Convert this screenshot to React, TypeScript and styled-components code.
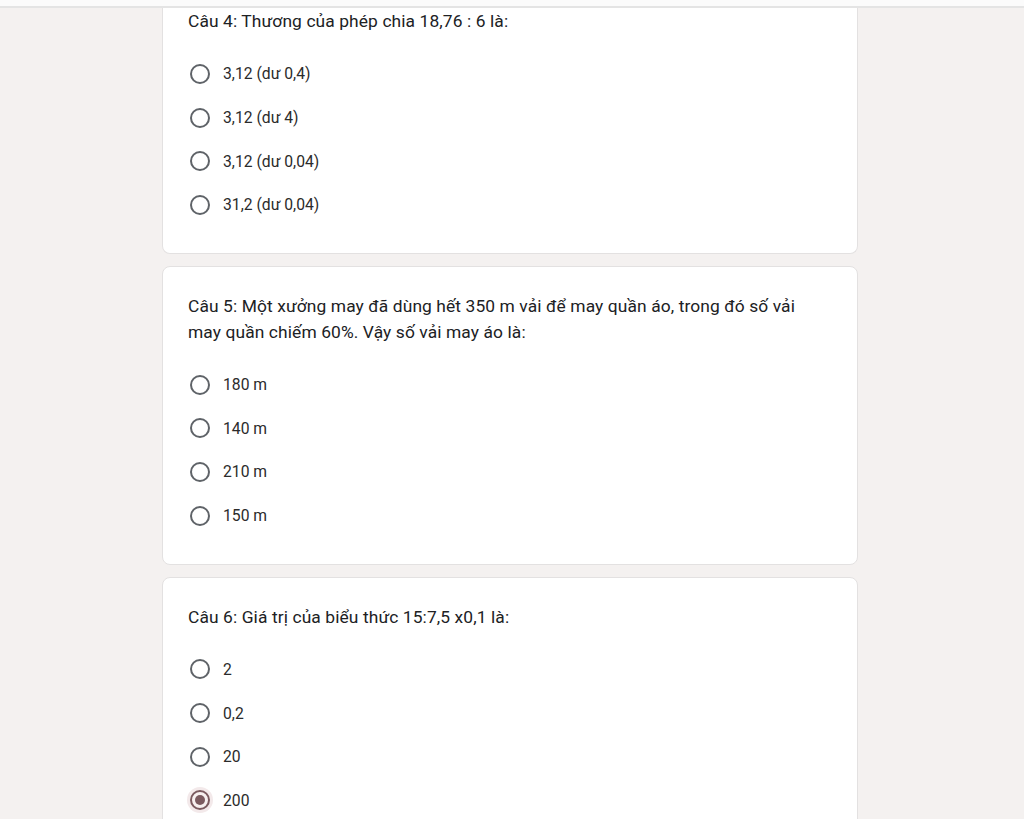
import React from 'react';
import styled, { createGlobalStyle } from 'styled-components';

const GlobalStyle = createGlobalStyle`
    html, body {
        margin: 0;
        padding: 0;
        background: #f4f1f0;
    }
    body {
        font-family: Roboto, "Liberation Sans", sans-serif;
        color: #202124;
        overflow: hidden;
    }
`;

interface Question {
    title: string;
    options: string[];
    selected?: number;
}

const questions: Question[] = [
    {
        title: 'Câu 4: Thương của phép chia 18,76 : 6 là:',
        options: ['3,12 (dư 0,4)', '3,12 (dư 4)', '3,12 (dư 0,04)', '31,2 (dư 0,04)'],
    },
    {
        title: 'Câu 5: Một xưởng may đã dùng hết 350 m vải để may quần áo, trong đó số vải may quần chiếm 60%. Vậy số vải may áo là:',
        options: ['180 m', '140 m', '210 m', '150 m'],
    },
    {
        title: 'Câu 6: Giá trị của biểu thức 15:7,5 x0,1 là:',
        options: ['2', '0,2', '20', '200'],
        selected: 3,
    },
];

const Page = styled.div`
    height: 819px;
    display: flex;
    flex-direction: column;
`;

const TopBar = styled.div`
    height: 6px;
    flex: none;
    background: #fbfbfb;
    border-bottom: 2px solid #e4e4e4;
`;

const List = styled.div`
    width: 696px;
    margin-left: 162px;
    display: flex;
    flex-direction: column;
    gap: 12px;
`;

const Card = styled.div<{ $clipped?: boolean }>`
    background: #ffffff;
    border: 1px solid #e3e1e1;
    border-top: ${(p) => (p.$clipped ? 'none' : '1px solid #e3e1e1')};
    border-radius: ${(p) => (p.$clipped ? '0 0 8px 8px' : '8px')};
    padding: ${(p) => (p.$clipped ? '0' : '26px')} 25px 26px 25px;
    box-sizing: border-box;
`;

const Title = styled.div`
    font-size: 17.4px;
    line-height: 26px;
    letter-spacing: 0.1px;
    padding-right: 14px;
    margin-bottom: 18px;
`;

const Option = styled.div`
    display: flex;
    align-items: center;
    height: 43.7px;
    gap: 13px;
    padding-left: 2px;
    font-size: 15.7px;
    color: #2b2b2b;
`;

const Radio = styled.span<{ $checked?: boolean }>`
    width: 20px;
    height: 20px;
    box-sizing: border-box;
    border-radius: 50%;
    border: 2px solid ${(p) => (p.$checked ? '#7b5a5f' : '#5f6368')};
    display: flex;
    align-items: center;
    justify-content: center;
    flex: none;
    box-shadow: ${(p) => (p.$checked ? '0 0 0 3px #f3e9ea' : 'none')};
    background: ${(p) => (p.$checked ? '#f7efef' : 'transparent')};
`;

const Dot = styled.span`
    width: 10px;
    height: 10px;
    border-radius: 50%;
    background: #7b5a5f;
`;

export default function App() {
    return (
        <Page>
            <GlobalStyle />
            <TopBar />
            <List>
                {questions.map((q, i) => (
                    <Card key={q.title} $clipped={i === 0}>
                        <Title>{q.title}</Title>
                        {q.options.map((o, j) => (
                            <Option key={o}>
                                <Radio $checked={q.selected === j}>
                                    {q.selected === j ? <Dot /> : null}
                                </Radio>
                                {o}
                            </Option>
                        ))}
                    </Card>
                ))}
            </List>
        </Page>
    );
}
